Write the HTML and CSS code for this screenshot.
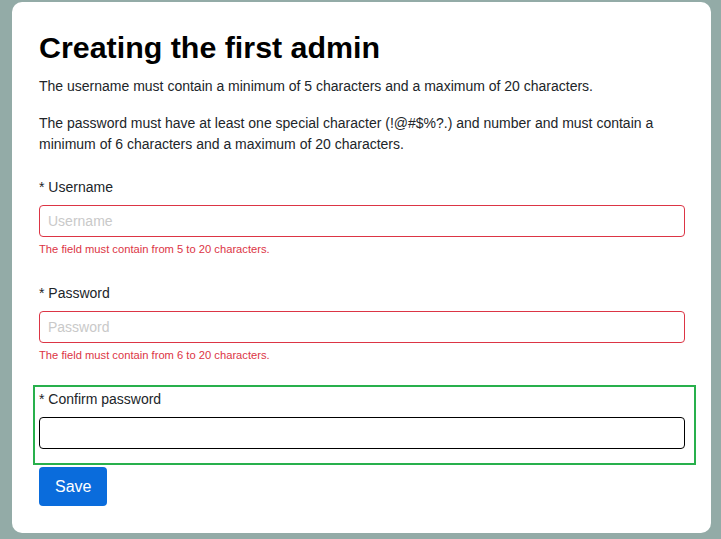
FILE: index.html
```html
<!DOCTYPE html>
<html>
<head>
<meta charset="utf-8">
<link rel="stylesheet" href="styles.css">
</head>
<body>
<main class="card">
  <h1 class="title">Creating the first admin</h1>
  <p class="note">The username must contain a minimum of 5 characters and a maximum of 20 characters.</p>
  <p class="note">The password must have at least one special character (!@#$%?.) and number and must contain a minimum of 6 characters and a maximum of 20 characters.</p>
  <form class="form">
    <div class="group">
      <label class="label" for="u">* Username</label>
      <input class="input invalid" id="u" type="text" placeholder="Username">
      <div class="error">The field must contain from 5 to 20 characters.</div>
    </div>
    <div class="group">
      <label class="label" for="p">* Password</label>
      <input class="input invalid" id="p" type="password" placeholder="Password">
      <div class="error">The field must contain from 6 to 20 characters.</div>
    </div>
    <div class="group focused">
      <label class="label" for="c">* Confirm password</label>
      <input class="input active" id="c" type="password">
    </div>
    <div class="actions">
      <button class="btn" type="button">Save</button>
    </div>
  </form>
</main>
</body>
</html>
```
FILE: styles.css
```css
* { box-sizing: border-box; }
html, body { height: 100%; }
body {
  margin: 0;
  padding: 2px 10px 6px 12px;
  background: #93aba7;
  font-family: "Liberation Sans", Arial, sans-serif;
  color: #212529;
}
.card {
  background: #fff;
  border-radius: 10px;
  height: 531px;
  padding: 27px 26px 27px 27px;
}
.title {
  margin: 0 0 11px;
  font-size: 30.4px;
  line-height: 36px;
  font-weight: 700;
  color: #000;
}
.note {
  margin: 0 0 16px;
  font-size: 14px;
  line-height: 21px;
}
.form {
  padding-top: 6px;
  display: flex;
  flex-direction: column;
}
.group {
  display: flex;
  flex-direction: column;
  margin-bottom: 26px;
}
.label {
  font-size: 14px;
  line-height: 21px;
  margin-bottom: 7px;
}
.input {
  height: 32px;
  width: 100%;
  border: 1px solid #ced4da;
  border-radius: 4px;
  padding: 0 8px;
  font-family: "Liberation Sans", Arial, sans-serif;
  font-size: 14px;
  color: #212529;
  background: #fff;
  outline: none;
}
.input::placeholder { color: #c9c9c9; }
.input.invalid { border-color: #dc3545; }
.input.active { border-color: #000; }
.error {
  margin-top: 4px;
  font-size: 11.2px;
  line-height: 16px;
  color: #dc3545;
}
.group.focused {
  margin: -4px -11px 0 -6px;
  border: 2px solid #28b04c;
  padding: 2px 9px 14px 4px;
}
.actions { margin-top: 2px; }
.btn {
  background: #0a6cdc;
  color: #fff;
  border: none;
  border-radius: 4px;
  font-family: "Liberation Sans", Arial, sans-serif;
  font-size: 16px;
  line-height: 25px;
  padding: 7px 16px;
  cursor: pointer;
}
```
